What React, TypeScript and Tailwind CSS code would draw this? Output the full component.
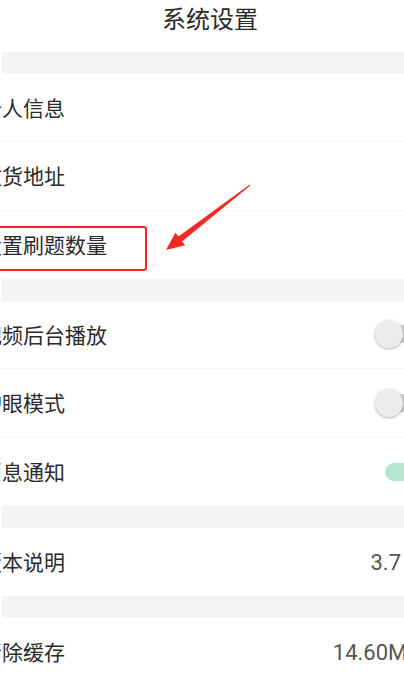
import React from 'react';

type Row = {
  label: string;
  value?: string;
  valueClass?: string;
  toggle?: 'on' | 'off';
  boxed?: boolean;
};

const sections: Row[][] = [
  [
    { label: '个人信息' },
    { label: '收货地址' },
    { label: '设置刷题数量', boxed: true },
  ],
  [
    { label: '视频后台播放', toggle: 'off' },
    { label: '护眼模式', toggle: 'off' },
    { label: '消息通知', toggle: 'on' },
  ],
  [{ label: '版本说明', value: '3.7', valueClass: 'mr-[3px]' }],
  [{ label: '清除缓存', value: '14.60MB', valueClass: 'mr-[-17px]' }],
];

function Toggle({ on }: { on: boolean }) {
  return (
    <div className="relative w-[64px] h-[28px] mr-[-35px] shrink-0">
      <div
        className={
          on
            ? 'absolute left-[10px] right-[10px] top-[5px] h-[18px] rounded-full bg-[#b6e6d1]'
            : 'absolute left-[10px] right-[10px] top-[5px] h-[18px] rounded-full bg-[#cfcfcf]'
        }
      />
      <div
        className={
          on
            ? 'absolute right-0 top-0 w-[28px] h-[28px] rounded-full bg-[#27b57a] shadow-[0_1px_3px_rgba(0,0,0,0.3)]'
            : 'absolute left-0 top-0 w-[28px] h-[28px] rounded-full bg-[#ececec] shadow-[0_1px_3px_rgba(0,0,0,0.3)]'
        }
      />
    </div>
  );
}

export default function App() {
  return (
    <div
      className="relative w-full h-[683px] overflow-hidden bg-white text-[#2a2a2a]"
      style={{ fontFamily: "Roboto, 'Noto Sans CJK SC', sans-serif" }}
    >
      {/* 标题 */}
      <div className="h-[52px] pt-[4px] flex justify-center">
        <h1 className="text-[24px] leading-[32px] font-normal pl-[16px]">系统设置</h1>
      </div>

      {sections.map((rows, si) => (
        <div key={si}>
          <div className="h-[21.5px] ml-[2px] bg-[#f4f4f4]" />
          {rows.map((row, ri) => (
            <div
              key={ri}
              className={
                ri < rows.length - 1
                  ? 'relative h-[68.5px] flex items-center justify-between border-b border-[#f6f6f6]'
                  : 'relative h-[68.5px] flex items-center justify-between'
              }
            >
              <span className="ml-[-19px] translate-y-[2px] text-[21px] leading-none whitespace-nowrap">
                {row.label}
              </span>
              {row.value && (
                <span
                  className={`translate-y-[1px] text-[22px] leading-none text-[#555] whitespace-nowrap ${row.valueClass ?? ''}`}
                >
                  {row.value}
                </span>
              )}
              {row.toggle && <Toggle on={row.toggle === 'on'} />}
              {row.boxed && (
                <div className="absolute left-[-10px] top-[15px] w-[157px] h-[45px] border-2 border-[#ef2a22] rounded-[3px]" />
              )}
            </div>
          ))}
        </div>
      ))}

      {/* 红色箭头 */}
      <svg
        className="absolute left-[160px] top-[180px]"
        width="100"
        height="80"
        viewBox="0 0 100 80"
      >
        <polygon
          points="89.7,4.6 18.5,56.6 15.4,52.7 6,70 25.2,65.3 22.1,61.4 90.3,5.4"
          fill="#ef2a22"
        />
      </svg>
    </div>
  );
}
